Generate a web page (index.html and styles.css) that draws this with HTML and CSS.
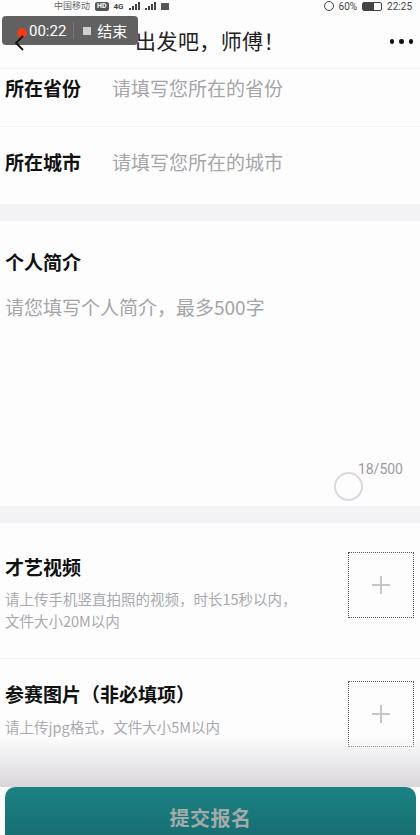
FILE: index.html
```html
<!DOCTYPE html>
<html lang="zh">
<head>
<meta charset="utf-8">
<title>出发吧，师傅！</title>
<link rel="stylesheet" href="styles.css">
</head>
<body>
<div class="page">
  <div class="status">
    <div class="status-left"><span class="carrier">中国移动</span><span class="hd">HD</span><span class="sig">4G</span><span class="bars"><i></i><i></i><i></i><i></i></span><span class="bars"><i></i><i></i><i></i><i></i></span><span class="sq"></span></div>
    <div class="status-right"><span class="ring"></span><span>60%</span><span class="batt"></span><span>22:25</span></div>
  </div>
  <header class="nav">
    <svg class="back" width="14" height="18" viewBox="0 0 14 18"><path d="M11 2 L4 9 L11 16" fill="none" stroke="#111" stroke-width="1.8"/></svg>
    <div class="title">出发吧，师傅！</div>
    <div class="more"><i></i><i></i><i></i></div>
  </header>

  <section class="group">
    <div class="row row-first"><span class="label">所在省份</span><span class="ph">请填写您所在的省份</span></div>
    <div class="row row-second"><span class="label">所在城市</span><span class="ph">请填写您所在的城市</span></div>
  </section>
  <div class="gap"></div>

  <section class="intro">
    <div class="label">个人简介</div>
    <div class="ph intro-ph">请您填写个人简介，最多500字</div>
    <div class="counter">18/500</div>
  </section>
  <div class="gap"></div>

  <section class="upload up-video">
    <div class="up-text">
      <div class="label">才艺视频</div>
      <div class="desc">请上传手机竖直拍照的视频，时长15秒以内，<br>文件大小20M以内</div>
    </div>
    <div class="box"><svg width="20" height="20" viewBox="0 0 20 20"><path d="M10 1 V19 M1 10 H19" stroke="#c6c6c9" stroke-width="2"/></svg></div>
  </section>
  <section class="upload up-image">
    <div class="up-text">
      <div class="label">参赛图片（非必填项）</div>
      <div class="desc desc-img">请上传jpg格式，文件大小5M以内</div>
    </div>
    <div class="box"><svg width="20" height="20" viewBox="0 0 20 20"><path d="M10 1 V19 M1 10 H19" stroke="#c6c6c9" stroke-width="2"/></svg></div>
  </section>

  <div class="footer">
    <div class="fade"></div>
    <button class="submit">提交报名</button>
  </div>

  <div class="rec"><span class="dot"></span><span class="time">00:22</span><span class="div"></span><span class="stop"></span><span>结束</span></div>
  <div class="touch"></div>
</div>
</body>
</html>
```

FILE: styles.css
```css
* { box-sizing: border-box; }
html, body { margin: 0; padding: 0; }
body {
  font-family: "Noto Sans CJK SC", "Noto Sans", sans-serif;
  background: #fdfdfe;
  color: #111;
}
.page {
  position: relative;
  width: 420px;
  height: 835px;
  overflow: hidden;
  background: #fdfdfe;
}
.status {
  height: 12px;
  display: flex;
  justify-content: space-between;
  align-items: center;
  padding: 0 8px 0 54px;
  font-size: 10px;
  line-height: 11px;
  color: #444;
  font-family: "Roboto", "Noto Sans CJK SC", sans-serif;
}
.status-left, .status-right { display: flex; align-items: center; gap: 5px; }
.carrier { font-size: 9px; color: #666; }
.hd { font-size: 7px; line-height: 9px; background: #555; color: #fff; padding: 0 2px; border-radius: 2px; font-weight: 700; }
.sig { font-size: 8px; font-weight: 700; }
.bars { display: flex; align-items: flex-end; gap: 1px; height: 8px; }
.bars i { display: block; width: 2px; background: #444; }
.bars i:nth-child(1) { height: 2px; }
.bars i:nth-child(2) { height: 4px; }
.bars i:nth-child(3) { height: 6px; }
.bars i:nth-child(4) { height: 8px; }
.sq { width: 8px; height: 7px; background: #555; }
.ring { width: 10px; height: 10px; border: 1.5px solid #444; border-radius: 50%; }
.batt { width: 20px; height: 9px; border: 1.5px solid #444; border-radius: 2px; background: linear-gradient(90deg, #444 60%, transparent 60%); }

.nav {
  position: relative;
  height: 57px;
  display: flex;
  align-items: center;
  justify-content: center;
  border-bottom: 1px solid #f1f1f4;
}
.back { position: absolute; left: 12px; top: 22px; z-index: 5; }
.title { font-size: 21px; color: #222; margin-top: 0; letter-spacing: 0.4px; }
.more { position: absolute; right: 7px; top: 27px; display: flex; gap: 5px; }
.more i { width: 4.5px; height: 4.5px; border-radius: 50%; background: #111; display: block; }

.label { font-size: 19px; font-weight: 700; line-height: 26px; color: #111; }
.ph { font-size: 19px; line-height: 26px; color: #a5a5a8; }

.group { background: #fdfdfe; }
.row { display: flex; align-items: center; gap: 31px; padding-left: 5px; }
.row-first { padding-top: 6px; height: 58px; padding-bottom: 26px; border-bottom: 1px solid #f1f1f4; }
.row-second { padding-top: 22px; height: 77px; padding-bottom: 29px; }
.gap { height: 17px; background: #f3f3f5; }

.intro { height: 285px; padding: 28px 17px 0 5px; display: flex; flex-direction: column; }
.intro-ph { margin-top: 19px; }
.counter { margin-top: auto; margin-bottom: 27px; align-self: flex-end; font-size: 14px; color: #9a9a9e; line-height: 20px; font-family: "Roboto", sans-serif; }

.upload { display: flex; justify-content: space-between; padding: 0 6px 0 5px; }
.up-video { height: 136px; padding-top: 29px; border-bottom: 1px solid #f1f1f4; }
.up-image { padding-top: 22px; }
.up-video .up-text { padding-top: 2px; }
.desc { margin-top: 8px; font-size: 14.5px; line-height: 22px; color: #a9a9ad; }
.desc-img { margin-top: 9px; }
.box {
  width: 66px; height: 66px;
  border: 1px dotted #555;
  display: flex; align-items: center; justify-content: center;
  flex: none;
}

.footer {
  position: absolute;
  left: 0; right: 0; bottom: 0;
  height: 100px;
  display: flex;
  flex-direction: column;
  justify-content: flex-end;
}
.fade {
  flex: 1;
  background: linear-gradient(180deg, rgba(253,253,254,0) 0%, #e9e8ea 55%, #d8d6d8 100%);
}
.submit {
  margin: 0 4px 0 5px;
  height: 48px;
  border: none;
  border-radius: 10px 10px 0 0;
  background: linear-gradient(180deg, #1b8283 0%, #176f72 100%);
  color: #a3aaaa;
  font-family: "Noto Sans CJK SC", sans-serif;
  font-size: 20px;
  font-weight: 700;
  line-height: 26px;
  padding: 18px 0 0;
  letter-spacing: 0.5px;
  display: flex;
  align-items: flex-start;
  justify-content: center;
}

.rec {
  position: absolute;
  left: 2px; top: 16px;
  width: 136px; height: 29px;
  border-radius: 4px;
  background: rgba(88,88,88,0.95);
  display: flex; align-items: center;
  padding-left: 15px;
  color: #fff;
  font-size: 15px;
  font-family: "Roboto", "Noto Sans CJK SC", sans-serif;
  z-index: 3;
}
.rec .dot { width: 10px; height: 10px; border-radius: 50%; background: #f23a16; margin-right: 2px; margin-top: 4px; }
.rec .time { margin-right: 7px; }
.rec .div { width: 1px; height: 17px; background: #777; margin-right: 9px; }
.rec .stop { width: 8px; height: 8px; background: #cfcfcf; margin-right: 6px; }

.touch {
  position: absolute;
  left: 334px; top: 472px;
  width: 29px; height: 29px;
  border-radius: 50%;
  border: 2px solid #d9d9de;
}
```
